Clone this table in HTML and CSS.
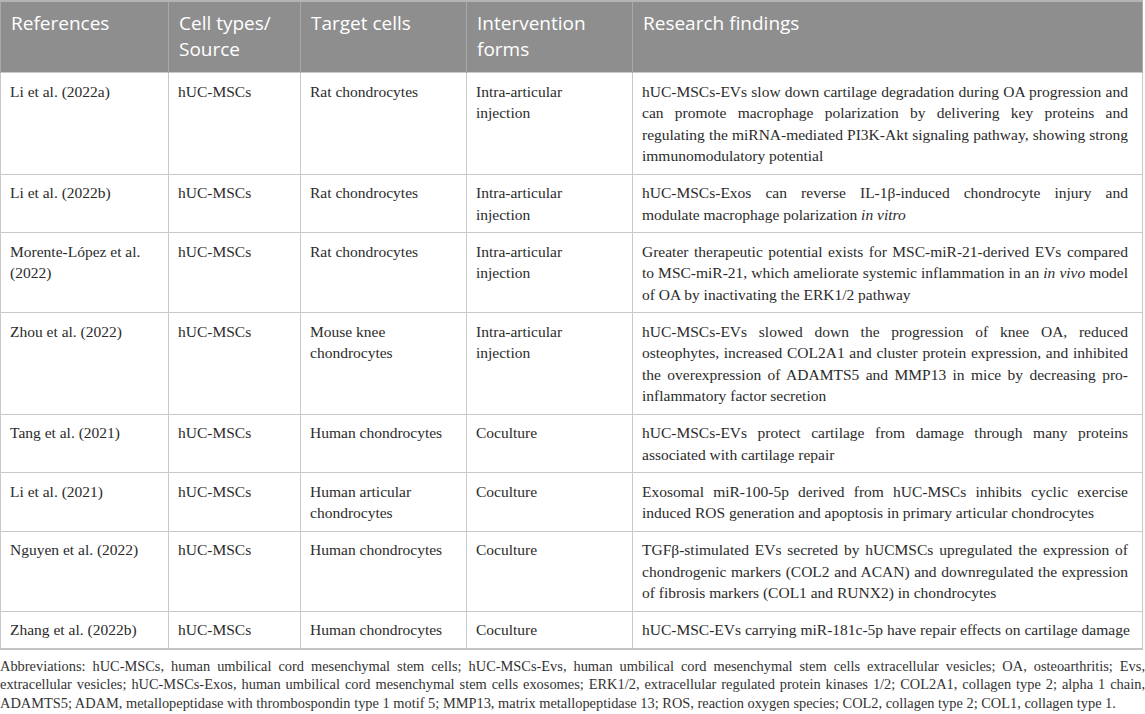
FILE: index.html
```html
<!DOCTYPE html>
<html lang="en">
<head>
    <meta charset="UTF-8">
    <title>hUC-MSC EVs in OA</title>
    <link rel="stylesheet" href="styles.css">
</head>
<body>
    <table class="data-table">
        <colgroup>
            <col class="col-ref">
            <col class="col-src">
            <col class="col-target">
            <col class="col-form">
            <col>
        </colgroup>
        <thead>
            <tr>
                <th>References</th>
                <th>Cell types/<br>Source</th>
                <th>Target cells</th>
                <th>Intervention<br>forms</th>
                <th>Research findings</th>
            </tr>
        </thead>
        <tbody>
            <tr>
                <td>Li et al. (2022a)</td>
                <td>hUC-MSCs</td>
                <td>Rat chondrocytes</td>
                <td>Intra-articular injection</td>
                <td class="finding">hUC-MSCs-EVs slow down cartilage degradation during OA progression and can promote macrophage polarization by delivering key proteins and regulating the miRNA-mediated PI3K-Akt signaling pathway, showing strong immunomodulatory potential</td>
            </tr>
            <tr>
                <td>Li et al. (2022b)</td>
                <td>hUC-MSCs</td>
                <td>Rat chondrocytes</td>
                <td>Intra-articular injection</td>
                <td class="finding">hUC-MSCs-Exos can reverse IL-1β-induced chondrocyte injury and modulate macrophage polarization <i>in vitro</i></td>
            </tr>
            <tr>
                <td>Morente-López et al. (2022)</td>
                <td>hUC-MSCs</td>
                <td>Rat chondrocytes</td>
                <td>Intra-articular injection</td>
                <td class="finding">Greater therapeutic potential exists for MSC-miR-21-derived EVs compared to MSC-miR-21, which ameliorate systemic inflammation in an <i>in vivo</i> model of OA by inactivating the ERK1/2 pathway</td>
            </tr>
            <tr>
                <td>Zhou et al. (2022)</td>
                <td>hUC-MSCs</td>
                <td>Mouse knee chondrocytes</td>
                <td>Intra-articular injection</td>
                <td class="finding">hUC-MSCs-EVs slowed down the progression of knee OA, reduced osteophytes, increased COL2A1 and cluster protein expression, and inhibited the overexpression of ADAMTS5 and MMP13 in mice by decreasing pro-inflammatory factor secretion</td>
            </tr>
            <tr>
                <td>Tang et al. (2021)</td>
                <td>hUC-MSCs</td>
                <td>Human chondrocytes</td>
                <td>Coculture</td>
                <td class="finding">hUC-MSCs-EVs protect cartilage from damage through many proteins associated with cartilage repair</td>
            </tr>
            <tr>
                <td>Li et al. (2021)</td>
                <td>hUC-MSCs</td>
                <td>Human articular chondrocytes</td>
                <td>Coculture</td>
                <td class="finding">Exosomal miR-100-5p derived from hUC-MSCs inhibits cyclic exercise induced ROS generation and apoptosis in primary articular chondrocytes</td>
            </tr>
            <tr>
                <td>Nguyen et al. (2022)</td>
                <td>hUC-MSCs</td>
                <td>Human chondrocytes</td>
                <td>Coculture</td>
                <td class="finding">TGFβ-stimulated EVs secreted by hUCMSCs upregulated the expression of chondrogenic markers (COL2 and ACAN) and downregulated the expression of fibrosis markers (COL1 and RUNX2) in chondrocytes</td>
            </tr>
            <tr>
                <td>Zhang et al. (2022b)</td>
                <td>hUC-MSCs</td>
                <td>Human chondrocytes</td>
                <td>Coculture</td>
                <td class="finding one-line">hUC-MSC-EVs carrying miR-181c-5p have repair effects on cartilage damage</td>
            </tr>
        </tbody>
    </table>

    <p class="footnote">Abbreviations: hUC-MSCs, human umbilical cord mesenchymal stem cells; hUC-MSCs-Evs, human umbilical cord mesenchymal stem cells extracellular vesicles; OA, osteoarthritis; Evs, extracellular vesicles; hUC-MSCs-Exos, human umbilical cord mesenchymal stem cells exosomes; ERK1/2, extracellular regulated protein kinases 1/2; COL2A1, collagen type 2; alpha 1 chain, ADAMTS5; ADAM, metallopeptidase with thrombospondin type 1 motif 5; MMP13, matrix metallopeptidase 13; ROS, reaction oxygen species; COL2, collagen type 2; COL1, collagen type 1.</p>
</body>
</html>
```

FILE: styles.css
```css
body {
    margin: 0;
    background: #ffffff;
    color: #2b2b2b;
    font-family: "Liberation Serif", "Times New Roman", serif;
}

.data-table {
    width: 1143px;
    border-collapse: collapse;
    table-layout: fixed;
}

.col-ref {
    width: 168px;
}

.col-src {
    width: 132px;
}

.col-target {
    width: 166px;
}

.col-form {
    width: 166px;
}

.data-table th {
    background: #8e8e8e;
    color: #ffffff;
    font-family: "Open Sans", "Noto Sans", sans-serif;
    font-weight: normal;
    font-size: 19px;
    line-height: 26px;
    text-align: left;
    vertical-align: top;
    padding: 8px 9px 10px 10px;
    border-left: 1px solid #a9a9a9;
    border-right: 1px solid #a9a9a9;
    border-top: 2px solid #b4b4b4;
}

.data-table td {
    font-size: 15.5px;
    line-height: 21.5px;
    vertical-align: top;
    padding: 7.5px 14px 7px 9px;
    border: 1px solid #c9c9c9;
}

.data-table td.finding {
    text-align: justify;
}

/* the last finding sits on one line in the source table */
.data-table td.one-line {
    white-space: nowrap;
}

.data-table tbody tr:last-child td {
    border-bottom: 2px solid #c4c4c4;
}

.footnote {
    margin: 7px 0 0;
    font-size: 14.4px;
    line-height: 18.7px;
    text-align: justify;
    color: #333333;
}
```
